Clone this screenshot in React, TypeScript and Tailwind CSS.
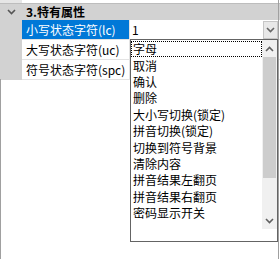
import React from 'react';

const items = [
  '字母',
  '取消',
  '确认',
  '删除',
  '大小写切换(锁定)',
  '拼音切换(锁定)',
  '切换到符号背景',
  '清除内容',
  '拼音结果左翻页',
  '拼音结果右翻页',
  '密码显示开关',
];

const rows = ['小写状态字符(lc)', '大写状态字符(uc)', '符号状态字符(spc)'];

const Chevron: React.FC<{ up?: boolean; className?: string }> = ({ up, className }) => (
  <svg width="9" height="6" viewBox="0 0 9 6" className={className}>
    <path
      d={up ? 'M1 5 L4.5 1.5 L8 5' : 'M1 1 L4.5 4.5 L8 1'}
      fill="none"
      stroke="currentColor"
      strokeWidth="1.6"
    />
  </svg>
);

export default function App() {
  return (
    <div
      className="relative w-[280px] h-[259px] overflow-hidden bg-white text-[12px] text-black"
      style={{ fontFamily: '"Noto Sans CJK SC", "Liberation Sans", sans-serif' }}
    >
      {/* top strip */}
      <div className="flex h-[3px]">
        <div className="w-[22px] bg-[#e6e6e6]" />
        <div className="flex-1 bg-white" />
      </div>
      <div className="h-px bg-[#bdbdbd]" />

      {/* category header */}
      <div className="flex h-[16px] items-center bg-[#d2d2d2]">
        <div className="flex w-[22px] justify-center text-[#555]">
          <Chevron />
        </div>
        <span className="pl-[4px] font-bold leading-none">3.特有属性</span>
      </div>

      {/* property rows */}
      {rows.map((label, i) => (
        <div key={label} className="flex h-[20px]">
          <div className="w-[22px] bg-[#d2d2d2]" />
          <div className="flex flex-1 border-b border-[#e3e3e3]">
            <div
              className={`flex w-[107px] items-center pl-[4px] leading-none ${
                i === 0 ? 'bg-[#0078d7] text-white' : 'bg-white'
              }`}
            >
              {label}
            </div>
            <div className="w-px bg-[#e3e3e3]" />
            <div className="flex-1 bg-white" />
          </div>
        </div>
      ))}

      {/* left/right frame lines */}
      <div className="absolute left-0 top-[79px] bottom-0 w-px bg-[#a0a0a0]" />
      <div className="absolute right-[1px] top-0 bottom-0 w-px bg-[#a0a0a0]" />

      {/* combobox */}
      <div className="absolute left-[130px] top-[21px] flex h-[18px] w-[148px]">
        <div className="flex flex-1 items-center bg-white pl-[2px] leading-none">1</div>
        <div className="flex w-[15px] items-center justify-center border border-[#c6c6c6] bg-[#e8e8e8] text-[#666]">
          <Chevron />
        </div>
      </div>

      {/* dropdown list */}
      <div className="absolute left-[130px] top-[39px] flex h-[203px] w-[148px] border border-[#646464] bg-white">
        <div className="flex-1 pt-[1px]">
          {items.map((it, i) => (
            <div
              key={it}
              className={`flex h-[16.4px] items-center pl-[2px] leading-none ${
                i === 0 ? 'outline outline-1 outline-dotted outline-black -outline-offset-1' : ''
              }`}
            >
              {it}
            </div>
          ))}
        </div>
        <div className="flex w-[15px] flex-col self-start h-[189px] bg-[#f0f0f0]">
          <div className="flex h-[17px] items-center justify-center text-[#606060]">
            <Chevron up />
          </div>
          <div className="mx-[1px] h-[121px] bg-[#cdcdcd]" />
          <div className="flex-1" />
          <div className="flex h-[17px] items-center justify-center text-[#606060]">
            <Chevron />
          </div>
        </div>
      </div>
    </div>
  );
}
